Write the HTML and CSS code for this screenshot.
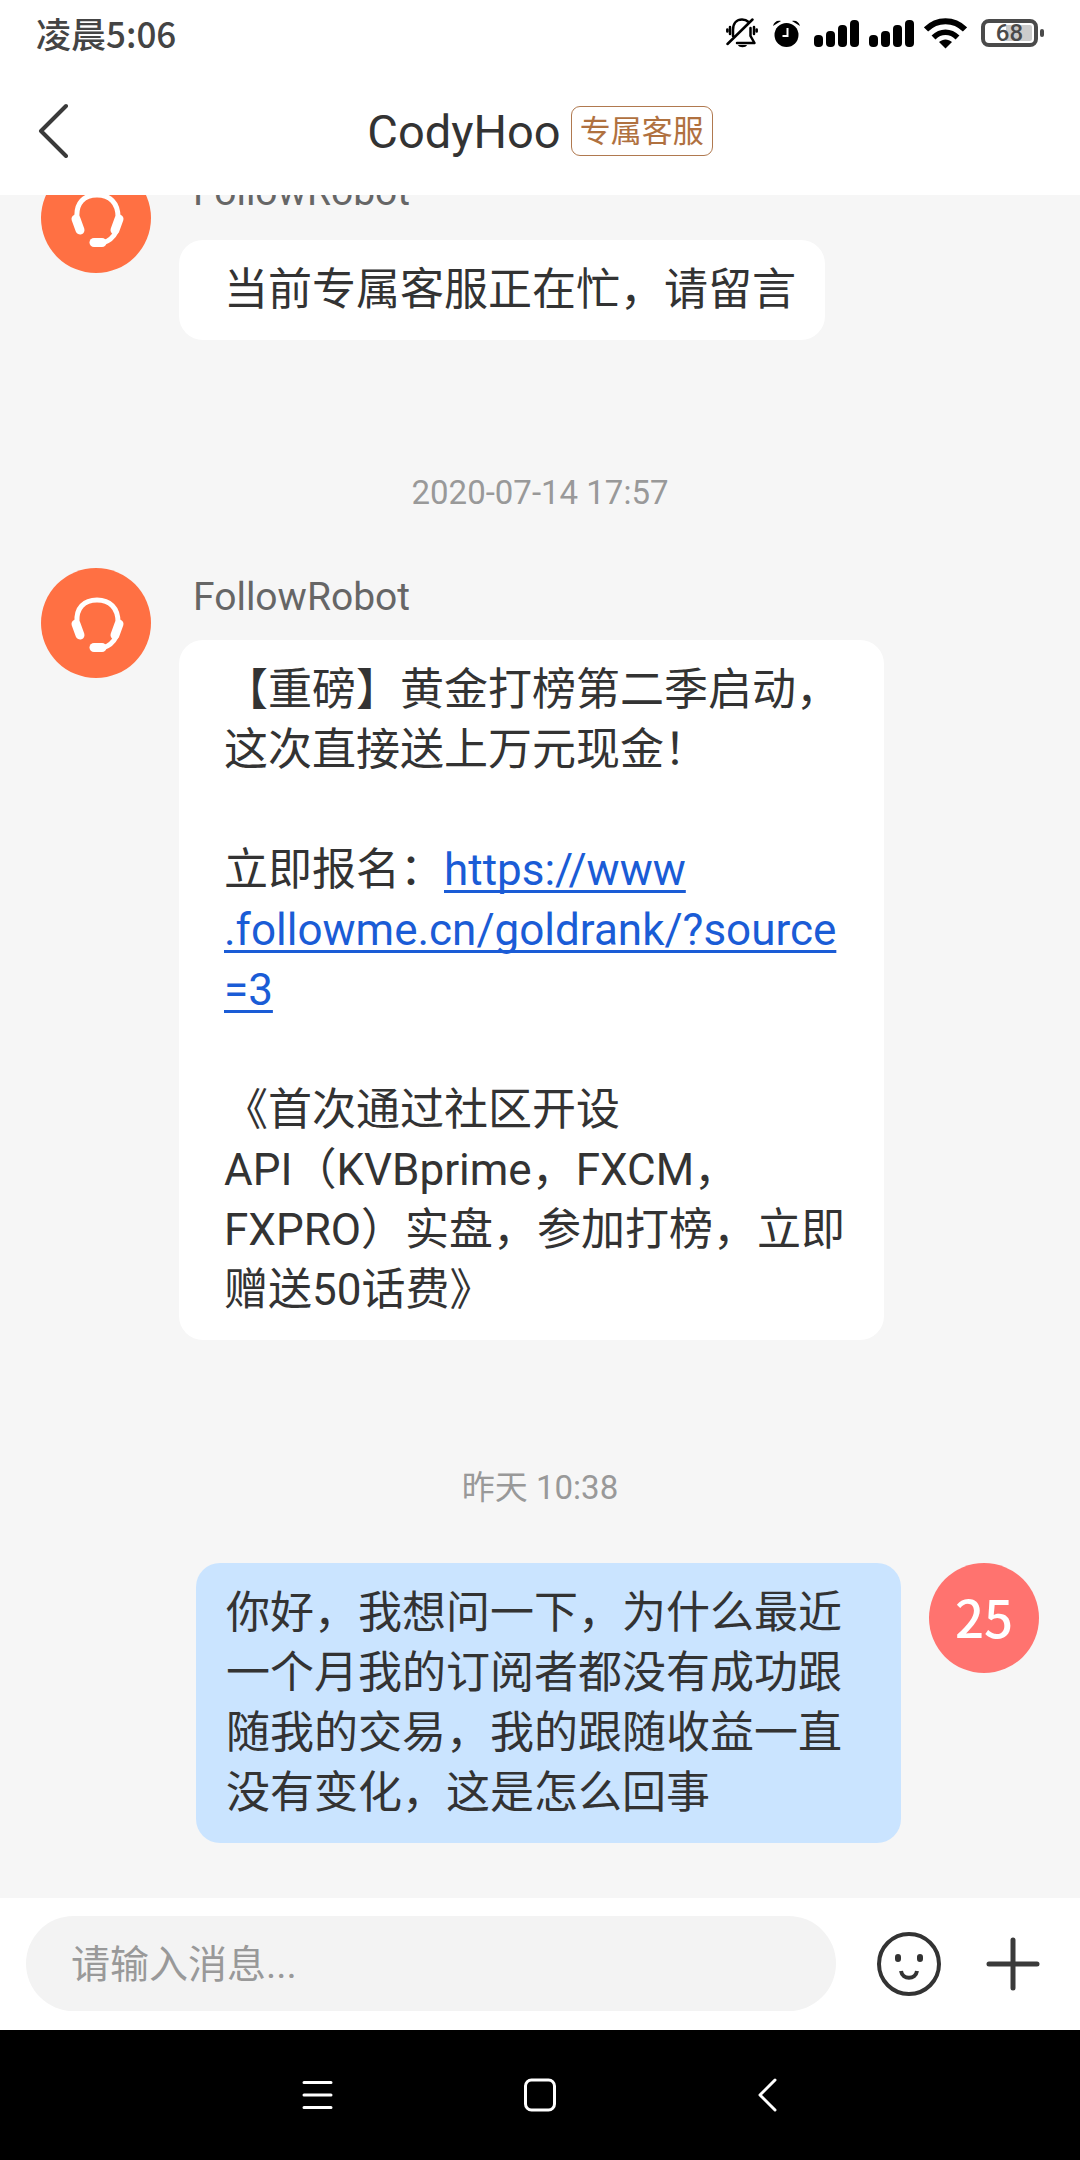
FILE: index.html
```html
<!DOCTYPE html>
<html lang="zh-CN">
<head>
<meta charset="utf-8">
<meta name="viewport" content="width=device-width, initial-scale=1">
<title>CodyHoo</title>
<link rel="stylesheet" href="styles.css">
</head>
<body>
<svg class="defs" aria-hidden="true">
  <symbol id="headset" viewBox="0 0 110 110">
    <g fill="none" stroke="#fff" stroke-linecap="round" stroke-linejoin="round">
      <path stroke-width="5" d="M36 54C35 40 43 32 56 32s21 8 21 22"/>
      <path stroke-width="9" d="M35 56l4 11M78 56l-4 11"/>
      <path stroke-width="5" d="M75 69C72 75 68 78 62 80"/>
      <path stroke-width="9" d="M53 79.500h8"/>
    </g>
  </symbol>
  <symbol id="signal" viewBox="0 0 45 27">
    <rect x="0" y="15" width="9" height="12" rx="4"/>
    <rect x="12" y="11" width="9" height="16" rx="4"/>
    <rect x="24" y="5" width="9" height="22" rx="4"/>
    <rect x="36" y="0" width="9" height="27" rx="4"/>
  </symbol>
</svg>
<div class="app">
  <header class="top">
    <div class="status">
      <span class="clock">凌晨5:06</span>
      <div class="indicators">
        <svg class="bell" width="32" height="30" viewBox="0 0 32 30" fill="none" stroke="#000" stroke-width="2.500" stroke-linecap="round" stroke-linejoin="round">
          <path d="M7 18V12C7 5 11 1.500 16 1.500c3 0 5 1 6.500 2.500M24.500 10v8l4 7H11M1.500 26L26.500 1.500M4 9v7M1.300 11.500v2M28 9v7M30.700 11.500v2"/>
          <path fill="#000" stroke="none" d="M12 27h9c-1 3-8 3-9 0z"/>
        </svg>
        <svg class="alarm" width="27" height="27" viewBox="0 0 27 27">
          <circle cx="13.500" cy="15" r="12"/>
          <path d="M0 6C1 2 4 0 8 1zM27 6C26 2 23 0 19 1z"/>
          <path d="M14.500 8v8H9.500" fill="none" stroke="#fff" stroke-width="2"/>
        </svg>
        <svg class="signal" width="45" height="27"><use href="#signal"/></svg>
        <svg class="signal" width="45" height="27"><use href="#signal"/></svg>
        <svg class="wifi" width="43" height="31" viewBox="0 0 43 31" fill="none" stroke="#000">
          <path stroke-width="6" d="M2 11.500C13 .500 30 .500 41 11.500"/>
          <path stroke-width="5.500" d="M9.500 19.500c7-7 17-7 24 0"/>
          <path fill="#000" stroke="none" d="M21.500 30.500l-6.500-6.500c4-3.500 9-3.500 13 0z"/>
        </svg>
        <div class="battery"><span>68</span></div>
      </div>
    </div>
    <div class="bar">
      <button class="back" aria-label="返回"><svg width="32" height="56" viewBox="0 0 32 56" fill="none" stroke="#3a3a3a" stroke-width="4" stroke-linecap="round" stroke-linejoin="round"><path d="M28 4L3 29 28 54"/></svg></button>
      <h1 class="title">CodyHoo</h1>
      <span class="badge">专属客服</span>
    </div>
  </header>

  <main class="chat">
    <article class="msg">
      <div class="avatar bot"><svg width="110" height="110"><use href="#headset"/></svg></div>
      <div class="body">
        <div class="name">FollowRobot</div>
        <div class="slot"><p class="bubble">当前专属客服正在忙，请留言</p></div>
      </div>
    </article>

    <time class="time">2020-07-14 17:57</time>

    <article class="msg">
      <div class="avatar bot"><svg width="110" height="110"><use href="#headset"/></svg></div>
      <div class="body">
        <div class="name">FollowRobot</div>
        <div class="slot"><p class="bubble long">【重磅】黄金打榜第二季启动，<br>这次直接送上万元现金！<br><br>立即报名：<a href="https://www.followme.cn/goldrank/?source=3">https://www<br>.followme.cn/goldrank/?source<br>=3</a><br><br>《首次通过社区开设<br>API（KVBprime，FXCM，<br>FXPRO）实盘，参加打榜，立即<br>赠送50话费》</p></div>
      </div>
    </article>

    <time class="time">昨天 10:38</time>

    <article class="msg mine">
      <p class="bubble">你好，我想问一下，为什么最近一个月我的订阅者都没有成功跟随我的交易，我的跟随收益一直没有变化，这是怎么回事</p>
      <div class="avatar user">25</div>
    </article>
  </main>

  <form class="composer">
    <input class="field" type="text" placeholder="请输入消息..." aria-label="请输入消息">
    <button class="tool" type="button" aria-label="表情"><svg width="66" height="66" viewBox="0 0 66 66" fill="none" stroke="#333">
      <circle cx="33" cy="33" r="30" stroke-width="4"/>
      <path stroke-width="6" stroke-linecap="round" d="M22 26v2M44 26v2"/>
      <path stroke-width="4" d="M25 40c1.500 9 14.500 9 16 0"/>
    </svg></button>
    <button class="tool" type="button" aria-label="更多"><svg width="54" height="54" viewBox="0 0 54 54" stroke="#3a3a3a" stroke-width="5" stroke-linecap="round"><path d="M27 3v48M3 27h48"/></svg></button>
  </form>

  <nav class="nav">
    <button aria-label="最近任务"><svg width="40" height="34" viewBox="0 0 40 34" stroke="#fff" stroke-width="3" stroke-linecap="round"><path d="M9 4.500h27M9 17h27M9 29.500h27"/></svg></button>
    <button aria-label="主页"><svg width="34" height="34" viewBox="0 0 34 34" fill="none" stroke="#fff" stroke-width="3"><rect x="2.500" y="2" width="29" height="30" rx="6"/></svg></button>
    <button aria-label="返回"><svg width="40" height="34" viewBox="0 0 40 34" fill="none" stroke="#fff" stroke-width="3" stroke-linecap="round" stroke-linejoin="round"><path d="M30 2L15 17l15 15"/></svg></button>
  </nav>
</div>
</body>
</html>
```
FILE: styles.css
```css
* {
  box-sizing: border-box;
}

body {
  margin: 0;
  font-family: Roboto, "Noto Sans CJK SC", sans-serif;
  color: #333;
  text-spacing-trim: space-all;
}

button {
  display: flex;
  align-items: center;
  justify-content: center;
  padding: 0;
  border: 0;
  background: none;
}

svg {
  display: block;
}

.defs {
  position: absolute;
  width: 0;
  height: 0;
}

.app {
  display: flex;
  flex-direction: column;
  height: 100vh;
  background: #f6f6f6;
}

.top {
  flex: none;
  background: #fff;
}

.status {
  display: flex;
  align-items: center;
  justify-content: space-between;
  height: 66px;
  padding: 0 36px;
}

.clock {
  font: 500 35px/48px "Noto Sans CJK SC", sans-serif;
  color: #444;
}

.indicators {
  display: flex;
  align-items: center;
}

.bell {
  margin-right: 15px;
}

.alarm {
  margin-right: 14px;
}

.signal {
  margin-right: 10px;
}

.wifi {
  margin-right: 14px;
}

.battery {
  position: relative;
  width: 57px;
  height: 28px;
  margin-right: 6px;
  padding: 2px;
  border: 4px solid #4a4a4a;
  border-radius: 8px;
  background: linear-gradient(90deg, #fff 42%, #ccc 42%) content-box;
  font-weight: 500;
  font-size: 24px;
  text-align: center;
  color: #4a4a4a;
}

.battery span {
  display: block;
  line-height: 16px;
}

.battery::after {
  content: "";
  position: absolute;
  top: 6px;
  right: -10px;
  width: 4px;
  height: 8px;
  border-radius: 2px;
  background: #4a4a4a;
}

.bar {
  position: relative;
  display: flex;
  align-items: center;
  justify-content: center;
  gap: 10px;
  height: 129px;
}

.back {
  position: absolute;
  left: 38px;
  top: 36px;
}

.title {
  margin: 0;
  padding-top: 2px;
  font-weight: 400;
  font-size: 47px;
  line-height: 56px;
}

.badge {
  padding: 1px 8px 0;
  border: 1px solid #b0794f;
  border-radius: 9px;
  font-size: 31px;
  line-height: 47px;
  color: #b0713f;
}

.chat {
  flex: 1;
  min-height: 0;
  display: flex;
  flex-direction: column;
  justify-content: flex-end;
  padding: 0 41px 55px;
  overflow: hidden;
}

.msg {
  flex: none;
  display: flex;
  align-items: flex-start;
  gap: 28px;
}

.mine {
  justify-content: flex-end;
}

.avatar {
  flex: none;
  width: 110px;
  height: 110px;
  border-radius: 50%;
}

.bot {
  background: #ff7043;
}

.user {
  background: #ff736f;
  color: #fff;
  font: 500 51px/106px "Noto Sans CJK SC", sans-serif;
  text-align: center;
}

.body {
  flex: 0 1 705px;
}

.name {
  height: 72px;
  padding-left: 14px;
  font-size: 39px;
  line-height: 58px;
  color: #666;
}

.slot {
  display: flex;
  align-items: center;
  min-height: 110px;
}

.bubble {
  margin: 0;
  padding: 20px 29px 20px 45px;
  border-radius: 24px;
  background: #fff;
  font-size: 44px;
  line-height: 60px;
}

.bubble.long {
  width: 100%;
}

.bubble a {
  color: #1a5cd6;
  text-decoration-thickness: 3px;
  text-underline-offset: 5px;
  text-decoration-skip-ink: none;
}

.mine .bubble {
  max-width: 705px;
  padding: 20px 30px;
  background: #cae4ff;
}

.time {
  flex: none;
  margin: 124px 0 51px;
  font-size: 33px;
  line-height: 48px;
  text-align: center;
  color: #999;
}

.composer {
  flex: none;
  display: flex;
  align-items: center;
  padding: 18px 40px 19px 26px;
  background: #fff;
}

.field {
  flex: 1;
  min-width: 0;
  height: 95px;
  margin-right: 40px;
  padding: 2px 45px 0;
  border: 0;
  border-radius: 48px;
  background: #f3f3f3;
  font: inherit;
  font-size: 39px;
}

.field::placeholder {
  color: #999;
  opacity: 1;
}

.tool + .tool {
  margin-left: 44px;
}

.nav {
  flex: none;
  display: grid;
  grid-template-columns: repeat(3, 225px);
  justify-content: center;
  height: 130px;
  background: #000;
}
```
